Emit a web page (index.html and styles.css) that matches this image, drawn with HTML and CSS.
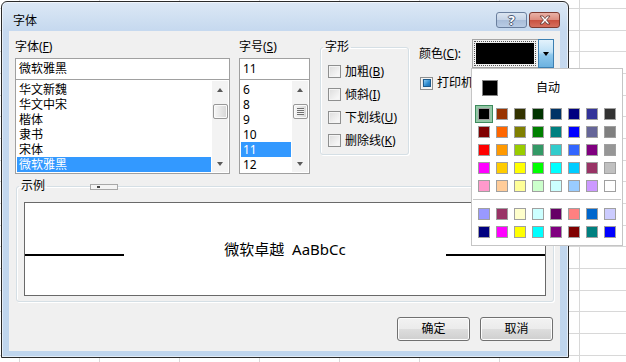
FILE: index.html
```html
<!DOCTYPE html>
<html lang="zh-CN">
<head>
    <meta charset="UTF-8">
    <title>字体</title>
    <link rel="stylesheet" href="styles.css">
</head>
<body>
    <div class="window">
        <div class="titlebar">
            <span class="title">字体</span>
            <div class="caption-buttons">
                <span class="cap help">?</span>
                <span class="cap close">
                    <svg width="12" height="10" viewBox="0 0 12 10"><path d="M1 1H4L6 3.6L8 1H11L7.6 5L11 9H8L6 6.4L4 9H1L4.4 5Z" fill="#fff" stroke="#5b2f2a" stroke-width="0.8"/></svg>
                </span>
            </div>
        </div>

        <div class="client">
            <div class="top-row">
                <div class="col font-col">
                    <div class="label">字体(<u>F</u>)</div>
                    <div class="textbox">微软雅黑</div>
                    <div class="listbox">
                        <ul class="items">
                            <li>华文新魏</li>
                            <li>华文中宋</li>
                            <li>楷体</li>
                            <li>隶书</li>
                            <li>宋体</li>
                            <li class="selected">微软雅黑</li>
                        </ul>
                        <div class="scrollbar">
                            <span class="arrow up"></span>
                            <span class="thumb"></span>
                            <span class="arrow down"></span>
                        </div>
                    </div>
                </div>

                <div class="col size-col">
                    <div class="label">字号(<u>S</u>)</div>
                    <div class="textbox">11</div>
                    <div class="listbox">
                        <ul class="items">
                            <li>6</li>
                            <li>8</li>
                            <li>9</li>
                            <li>10</li>
                            <li class="selected">11</li>
                            <li>12</li>
                        </ul>
                        <div class="scrollbar">
                            <span class="arrow up"></span>
                            <span class="thumb grip"></span>
                            <span class="arrow down"></span>
                        </div>
                    </div>
                </div>

                <fieldset class="group style-group">
                    <legend>字形</legend>
                    <label class="check"><span class="box"></span>加粗(<u>B</u>)</label>
                    <label class="check"><span class="box"></span>倾斜(<u>I</u>)</label>
                    <label class="check"><span class="box"></span>下划线(<u>U</u>)</label>
                    <label class="check"><span class="box"></span>删除线(<u>K</u>)</label>
                </fieldset>

                <div class="color-col">
                    <div class="color-row">
                        <span class="color-label">颜色(<u>C</u>):</span>
                        <div class="combo">
                            <div class="combo-value"><span class="focus"><span class="current"></span></span></div>
                            <span class="combo-btn"></span>
                        </div>
                    </div>
                    <label class="check printer"><span class="box checked"><span></span></span>打印机</label>
                </div>
            </div>

            <fieldset class="group preview-group">
                <legend>示例</legend>
                <span class="mini-ctrl"><span></span></span>
                <div class="preview">
                    <span class="base-line"></span>
                    <span class="sample">微软卓越&nbsp;&nbsp;AaBbCc</span>
                    <span class="base-line"></span>
                </div>
            </fieldset>

            <div class="buttons">
                <span class="btn">确定</span>
                <span class="btn">取消</span>
            </div>
        </div>
    </div>

    <div class="color-popup">
        <div class="auto-row">
            <span class="auto-swatch"></span>
            <span class="auto-text">自动</span>
        </div>
        <div class="palette">
            <span class="cell selected"><i style="background:#000000"></i></span>
            <span class="cell"><i style="background:#993300"></i></span>
            <span class="cell"><i style="background:#333300"></i></span>
            <span class="cell"><i style="background:#003300"></i></span>
            <span class="cell"><i style="background:#003366"></i></span>
            <span class="cell"><i style="background:#000080"></i></span>
            <span class="cell"><i style="background:#333399"></i></span>
            <span class="cell"><i style="background:#333333"></i></span>

            <span class="cell"><i style="background:#800000"></i></span>
            <span class="cell"><i style="background:#ff6600"></i></span>
            <span class="cell"><i style="background:#808000"></i></span>
            <span class="cell"><i style="background:#008000"></i></span>
            <span class="cell"><i style="background:#008080"></i></span>
            <span class="cell"><i style="background:#0000ff"></i></span>
            <span class="cell"><i style="background:#666699"></i></span>
            <span class="cell"><i style="background:#808080"></i></span>

            <span class="cell"><i style="background:#ff0000"></i></span>
            <span class="cell"><i style="background:#ff9900"></i></span>
            <span class="cell"><i style="background:#99cc00"></i></span>
            <span class="cell"><i style="background:#339966"></i></span>
            <span class="cell"><i style="background:#33cccc"></i></span>
            <span class="cell"><i style="background:#3366ff"></i></span>
            <span class="cell"><i style="background:#800080"></i></span>
            <span class="cell"><i style="background:#969696"></i></span>

            <span class="cell"><i style="background:#ff00ff"></i></span>
            <span class="cell"><i style="background:#ffcc00"></i></span>
            <span class="cell"><i style="background:#ffff00"></i></span>
            <span class="cell"><i style="background:#00ff00"></i></span>
            <span class="cell"><i style="background:#00ffff"></i></span>
            <span class="cell"><i style="background:#00ccff"></i></span>
            <span class="cell"><i style="background:#993366"></i></span>
            <span class="cell"><i style="background:#c0c0c0"></i></span>

            <span class="cell"><i style="background:#ff99cc"></i></span>
            <span class="cell"><i style="background:#ffcc99"></i></span>
            <span class="cell"><i style="background:#ffff99"></i></span>
            <span class="cell"><i style="background:#ccffcc"></i></span>
            <span class="cell"><i style="background:#ccffff"></i></span>
            <span class="cell"><i style="background:#99ccff"></i></span>
            <span class="cell"><i style="background:#cc99ff"></i></span>
            <span class="cell"><i style="background:#ffffff"></i></span>
        </div>
        <div class="separator"></div>
        <div class="palette">
            <span class="cell"><i style="background:#9999ff"></i></span>
            <span class="cell"><i style="background:#993366"></i></span>
            <span class="cell"><i style="background:#ffffcc"></i></span>
            <span class="cell"><i style="background:#ccffff"></i></span>
            <span class="cell"><i style="background:#660066"></i></span>
            <span class="cell"><i style="background:#ff8080"></i></span>
            <span class="cell"><i style="background:#0066cc"></i></span>
            <span class="cell"><i style="background:#ccccff"></i></span>

            <span class="cell"><i style="background:#000080"></i></span>
            <span class="cell"><i style="background:#ff00ff"></i></span>
            <span class="cell"><i style="background:#ffff00"></i></span>
            <span class="cell"><i style="background:#00ffff"></i></span>
            <span class="cell"><i style="background:#800080"></i></span>
            <span class="cell"><i style="background:#800000"></i></span>
            <span class="cell"><i style="background:#008080"></i></span>
            <span class="cell"><i style="background:#0000ff"></i></span>
        </div>
    </div>
</body>
</html>
```

FILE: styles.css
```css
* {
    box-sizing: border-box;
}

body {
    margin: 0;
    width: 626px;
    height: 362px;
    overflow: hidden;
    position: relative;
    font-family: "Noto Sans", "Noto Sans CJK SC", sans-serif;
    font-size: 12px;
    color: #000;
    background-color: #fff;
    background-image:
        repeating-linear-gradient(to right, #d8d8d8 0 1px, transparent 1px 80px),
        repeating-linear-gradient(to bottom, #d8d8d8 0 1px, transparent 1px 22px, #d8d8d8 22px 23px, transparent 23px 43px, #d8d8d8 43px 44px, transparent 44px 65px);
    background-position: 19px 0, 0 8px;
}

u {
    text-decoration: underline;
    text-underline-offset: 1px;
}

/* window frame */
.window {
    position: absolute;
    left: 1px;
    top: 1px;
    width: 568px;
    height: 357px;
    border: 1px solid #2a2a2a;
    border-radius: 6px 6px 0 0;
    background: linear-gradient(#dce8f5 0, #c6d9ef 28px, #bfd5ed 100%);
    box-shadow: inset 0 0 0 1px rgba(255, 255, 255, 0.55);
}

.titlebar {
    height: 29px;
    display: flex;
    justify-content: space-between;
    align-items: flex-start;
    padding: 0 8px 0 11px;
}

.title {
    line-height: 16px;
    margin-top: 11px;
}

.caption-buttons {
    display: flex;
    gap: 2px;
    margin-top: 10px;
}

.cap {
    width: 31px;
    height: 16px;
    border-radius: 3px;
    display: flex;
    justify-content: center;
    align-items: center;
}

.cap.help {
    border: 1px solid #6a7f9e;
    background: linear-gradient(#dbe5f1 0, #c4d3e6 50%, #a9bdd9 51%, #b8cbe4 100%);
    color: #fff;
    font-weight: bold;
    font-size: 13px;
    line-height: 14px;
    text-shadow: 1px 0 #4c5d78, -1px 0 #4c5d78, 0 1px #4c5d78, 0 -1px #4c5d78;
}

.cap.close {
    border: 1px solid #7d3a30;
    background: linear-gradient(#e9b2a6 0, #dc8c7e 50%, #c9503f 51%, #d6705f 100%);
}

.client {
    margin: 0 8px 0 7px;
    height: 320px;
    background: #f0f0f0;
    display: flex;
    flex-direction: column;
}

/* top row */
.top-row {
    display: flex;
    align-items: flex-start;
    padding: 7px 0 0 6px;
}

.col {
    display: flex;
    flex-direction: column;
}

.font-col {
    width: 215px;
    margin-right: 9px;
}

.size-col {
    width: 71px;
    margin-right: 10px;
}

.label {
    height: 18px;
    line-height: 18px;
    margin-bottom: 2px;
}

.textbox {
    height: 22px;
    border: 1px solid #a0a0a0;
    background: #fff;
    line-height: 19px;
    padding-left: 3px;
}

.listbox {
    height: 94px;
    border: 1px solid #a0a0a0;
    border-top: none;
    background: #fff;
    padding: 2px 1px 1px 1px;
    display: flex;
}

.items {
    list-style: none;
    margin: 0;
    padding: 0;
    flex: 1;
}

.items li {
    height: 15px;
    line-height: 15px;
    padding-left: 2px;
}

.items li.selected {
    background: #3399ff;
    color: #fff;
}

.scrollbar {
    width: 17px;
    margin-top: -1px;
    background: #f3f3f3;
    border-left: 1px solid #fff;
    display: flex;
    flex-direction: column;
    align-items: center;
}

.arrow {
    width: 0;
    height: 0;
    border-left: 3.5px solid transparent;
    border-right: 3.5px solid transparent;
}

.arrow.up {
    border-bottom: 4px solid #5a5a5a;
    margin-top: 7px;
}

.arrow.down {
    border-top: 4px solid #5a5a5a;
    margin-top: auto;
    margin-bottom: 6px;
}

.thumb {
    width: 15px;
    height: 15px;
    margin-top: 12px;
    border: 1px solid #979797;
    border-radius: 2px;
    background: linear-gradient(to right, #f7f7f7, #e6e6e6 50%, #d6d6d6);
    box-shadow: inset 0 0 0 1px #fafafa;
}

.thumb.grip {
    background:
        repeating-linear-gradient(#6f6f6f 0 1px, #f2f2f2 1px 2px) 3px 3px / 7px 7px no-repeat,
        linear-gradient(to right, #f7f7f7, #e6e6e6 50%, #d6d6d6);
}

/* group boxes */
.group {
    margin: 0;
    min-width: 0;
    border: 1px solid #d5dfe5;
    border-radius: 3px;
    box-shadow: inset 1px 1px 0 #fff, 1px 1px 0 #fff;
}

.group legend {
    margin-left: -5px;
    padding: 0 2px;
    height: 18px;
    line-height: 18px;
}

.style-group {
    width: 89px;
    height: 117px;
    padding: 4px 0 0 7px;
    margin-right: 10px;
}

.check {
    display: flex;
    align-items: center;
    height: 23px;
    line-height: 16px;
}

.box {
    width: 13px;
    height: 13px;
    margin-right: 4px;
    border: 1px solid #8e8f8f;
    background: linear-gradient(135deg, #dcdcdc, #f6f6f6 80%);
    box-shadow: inset 0 0 0 1px #f4f4f4;
    display: flex;
    justify-content: center;
    align-items: center;
}

.box.checked span {
    width: 8px;
    height: 8px;
    border: 1px solid #1c5b8e;
    background: linear-gradient(135deg, #8ccbf2, #2d8bd0 60%, #1f6fb0);
}

/* colour */
.color-col {
    display: flex;
    flex-direction: column;
    padding-top: 1px;
}

.color-row {
    display: flex;
    align-items: center;
}

.color-label {
    width: 53px;
    line-height: 16px;
}

.combo {
    width: 82px;
    height: 29px;
    border: 1px solid #a5a5a5;
    background: #f0f0f0;
    display: flex;
}

.combo-value {
    flex: 1;
    padding: 1px 2px 1px 1px;
    display: flex;
}

.focus {
    flex: 1;
    border: 1px dotted #555;
    padding: 1px;
    display: flex;
}

.current {
    flex: 1;
    background: #000;
}

.combo-btn {
    width: 16px;
    margin: -1px -1px -1px 0;
    border: 1px solid #3c7fb1;
    background: linear-gradient(#e3f2fc 0, #bde0f6 45%, #8fc8ec 55%, #6cb2e0 100%);
    display: flex;
    justify-content: center;
    align-items: center;
}

.combo-btn::after {
    content: "";
    border-left: 3.5px solid transparent;
    border-right: 3.5px solid transparent;
    border-top: 4px solid #000;
}

.check.printer {
    height: 14px;
    margin: 8px 0 0 1px;
}

/* preview */
.preview-group {
    position: relative;
    width: 538px;
    height: 124px;
    margin: 4px 0 0 7px;
    padding: 8px 7px 0 7px;
}

.preview-group legend {
    height: 16px;
    line-height: 16px;
}

.mini-ctrl {
    position: absolute;
    left: 73px;
    top: -10px;
    width: 28px;
    height: 6px;
    border: 1px solid #a8a8a8;
    background: #f4f4f4;
}

.mini-ctrl span {
    position: absolute;
    left: 6px;
    top: 1px;
    width: 3px;
    height: 2px;
    background: #444;
}

.preview {
    height: 94px;
    border: 1px solid #696969;
    background: #fff;
    display: flex;
    align-items: center;
}

.base-line {
    width: 99px;
    height: 2px;
    margin-top: 12px;
    background: #000;
}

.sample {
    flex: 1;
    text-align: center;
    font-size: 15px;
    line-height: 20px;
}

/* dialog buttons */
.buttons {
    display: flex;
    justify-content: flex-end;
    gap: 10px;
    margin: 15px 7px 0 0;
}

.btn {
    width: 73px;
    height: 24px;
    border: 1px solid #707070;
    border-radius: 3px;
    background: linear-gradient(#f2f2f2 0, #ebebeb 50%, #dddddd 51%, #cfcfcf 100%);
    box-shadow: inset 0 0 0 1px #fcfcfc;
    text-align: center;
    line-height: 21px;
}

/* colour drop-down */
.color-popup {
    position: absolute;
    left: 471px;
    top: 68px;
    width: 152px;
    height: 178px;
    border: 1px solid #c5c5c5;
    background: #fff;
    padding: 11px 3px 0 3px;
}

.auto-row {
    display: flex;
    align-items: center;
    height: 16px;
    padding-left: 7px;
    margin-bottom: 9px;
}

.auto-swatch {
    width: 16px;
    height: 16px;
    border: 1px solid #858585;
    background: #000;
}

.auto-text {
    margin-left: 38px;
    line-height: 16px;
}

.palette {
    display: grid;
    grid-template-columns: repeat(8, 18px);
    grid-auto-rows: 18px;
}

.cell {
    display: flex;
    justify-content: center;
    align-items: center;
}

.cell i {
    width: 12px;
    height: 12px;
    border: 1px solid #a0a0a0;
}

.cell.selected {
    border: 1px solid #3e8b5d;
    background: #93c8a6;
}

.separator {
    height: 1px;
    margin: 4px -2px 5px -2px;
    background: #c8c8c8;
}
```
